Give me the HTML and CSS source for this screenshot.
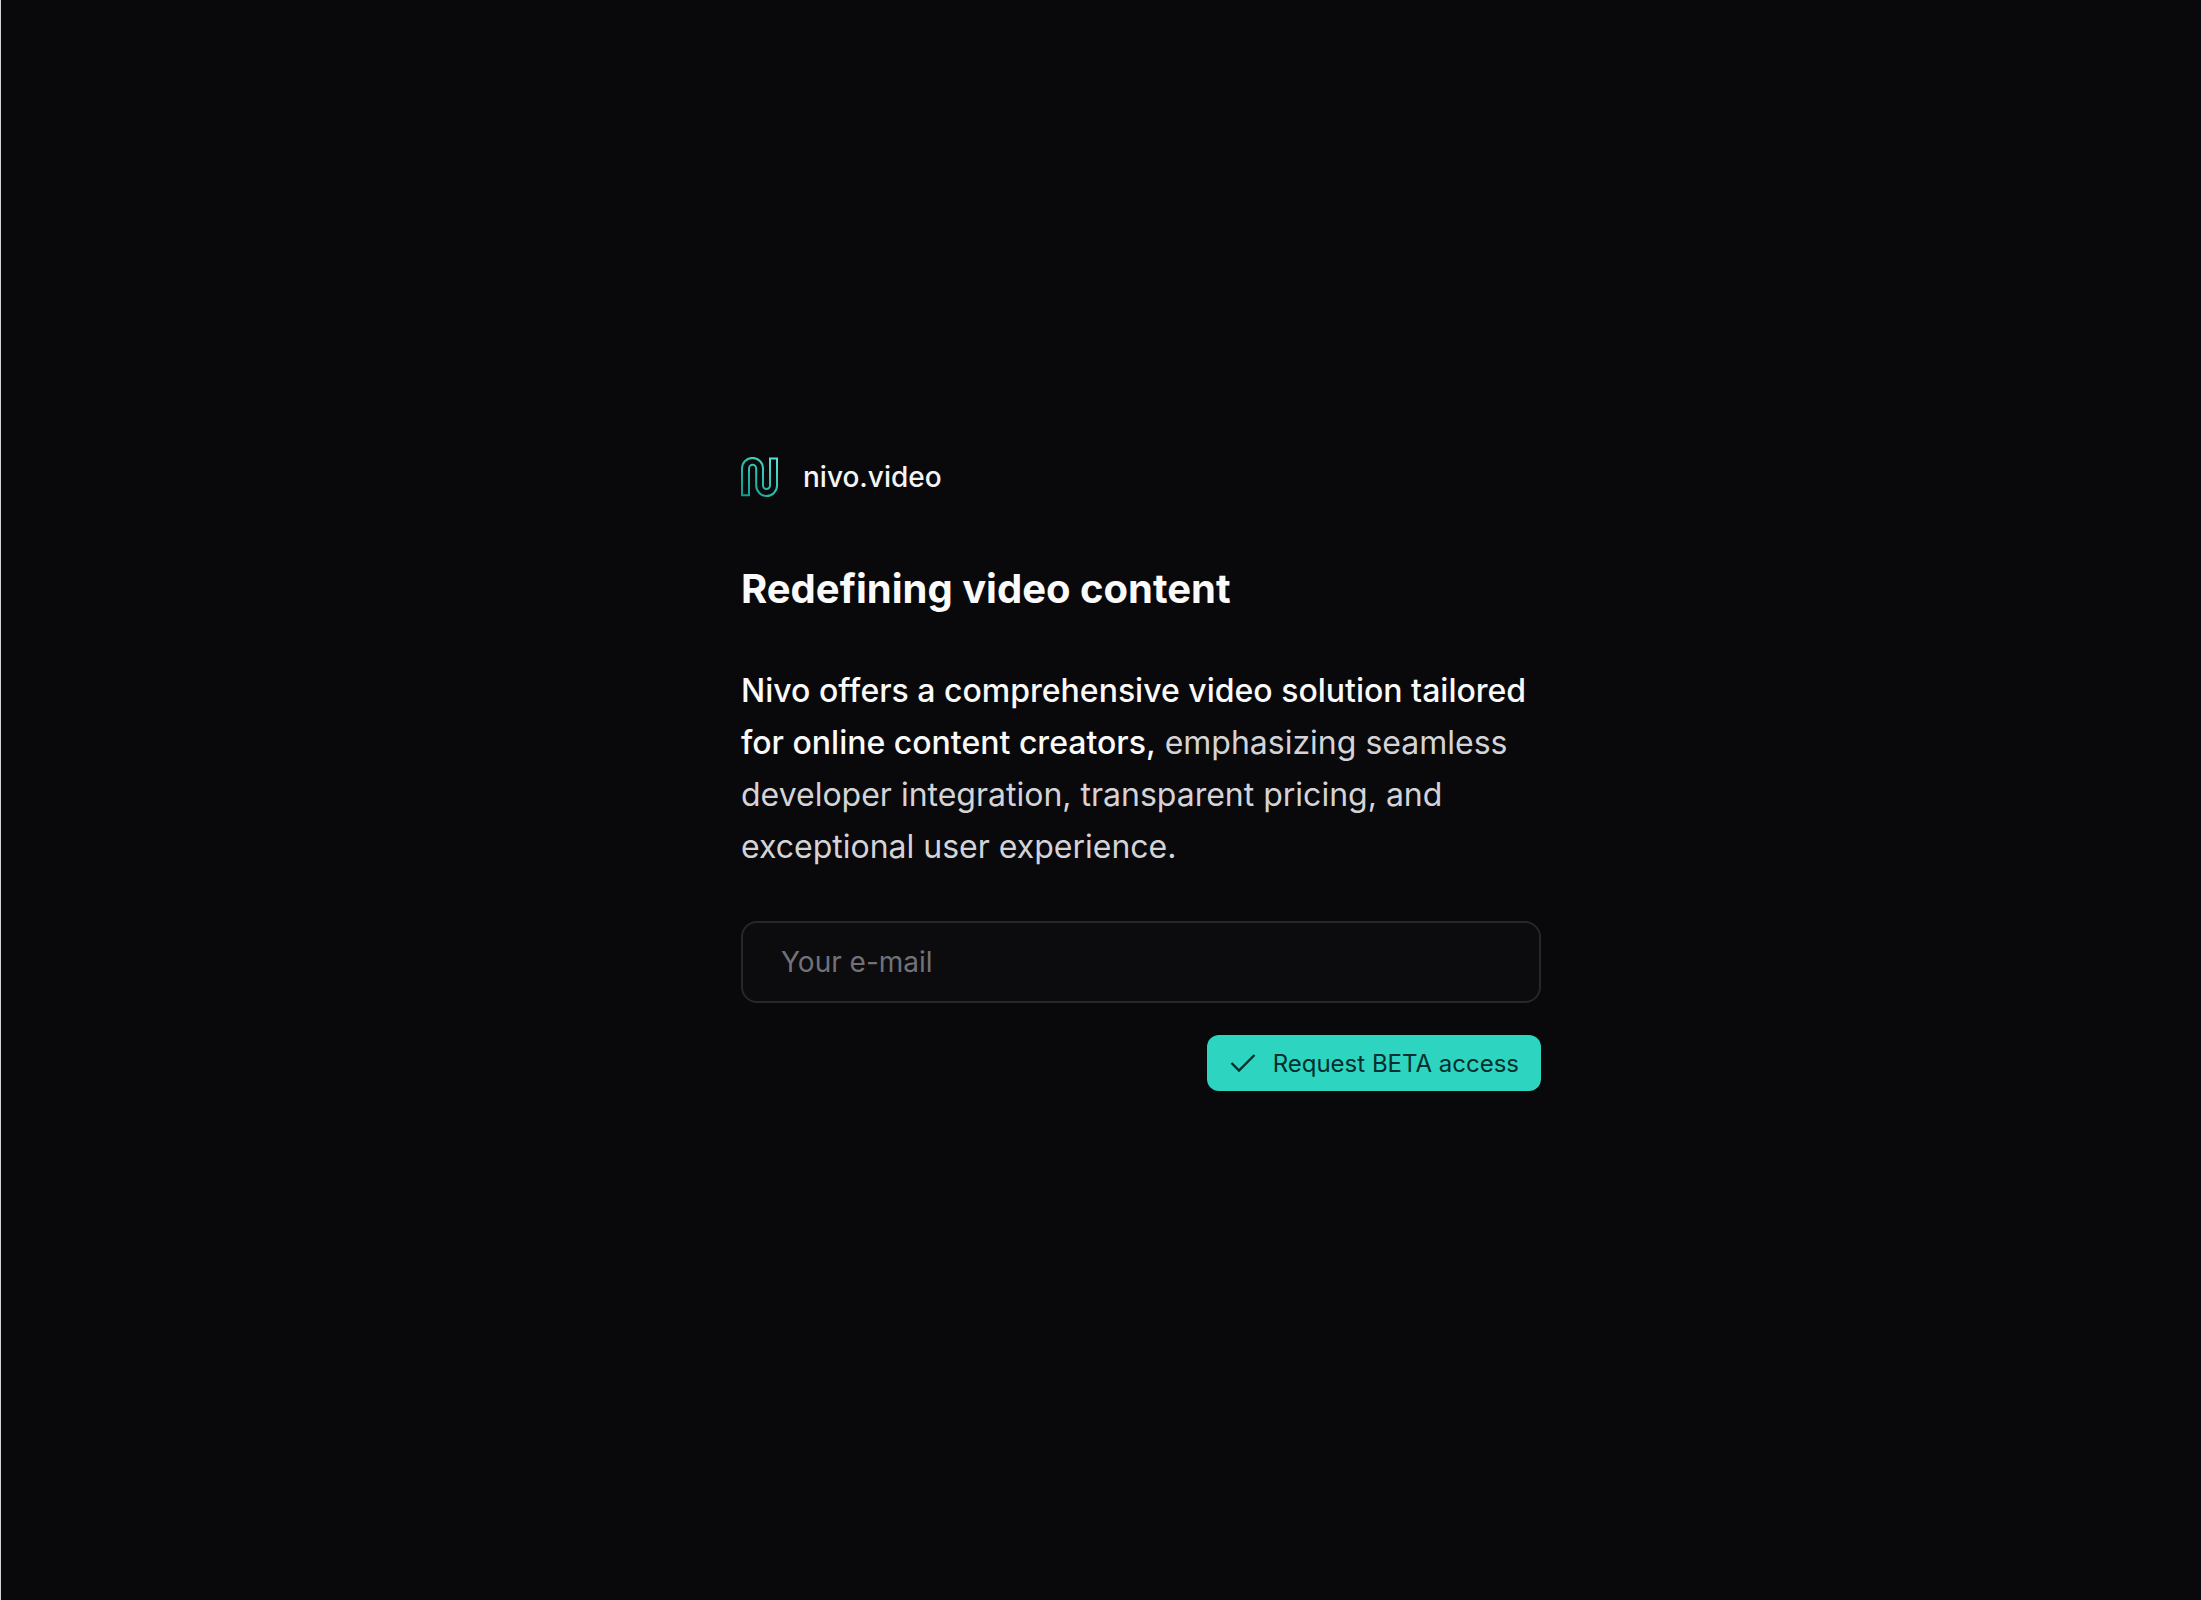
FILE: index.html
```html
<!DOCTYPE html>
<html lang="en">
<head>
  <meta charset="utf-8">
  <meta name="viewport" content="width=device-width, initial-scale=1">
  <title>nivo.video</title>
  <link rel="stylesheet" href="styles.css">
</head>
<body>
  <main class="page">
    <section class="intro">
      <a class="brand" href="#">
        <svg class="brand-mark" viewBox="0 0 38 40" fill="none" aria-hidden="true">
          <defs>
            <linearGradient id="mark" x1="38" y1="0" x2="0" y2="40" gradientUnits="userSpaceOnUse">
              <stop stop-color="#5eead4"/>
              <stop offset=".5" stop-color="#2dbfae"/>
              <stop offset="1" stop-color="#0d9488"/>
            </linearGradient>
          </defs>
          <path d="M1 38.2H8V11.4a3.6 3.6 0 0 1 7.2 0V28.6a10.4 10.4 0 0 0 20.8 0V1.6H29V28.6a3.5 3.5 0 0 1-7 0V11.4a10.5 10.5 0 0 0-21 0Z" stroke="url(#mark)" stroke-width="2"/>
        </svg>
        <span>nivo.video</span>
      </a>
      <h1 class="title">Redefining video content</h1>
      <p class="lead"><strong class="lead-strong">Nivo offers a comprehensive video solution tailored for online content creators,</strong> emphasizing seamless developer integration, transparent pricing, and exceptional user experience.</p>
      <form class="signup">
        <input class="email" type="email" placeholder="Your e-mail" aria-label="Your e-mail">
        <button class="submit" type="submit">
          <svg class="check" viewBox="0 0 28 28" fill="none" aria-hidden="true">
            <path d="M2.5 14L10 21.5L25.5 6" stroke="currentColor" stroke-width="2.4"/>
          </svg>
          Request BETA access
        </button>
      </form>
    </section>
  </main>
</body>
</html>
```
FILE: styles.css
```css
* {
  box-sizing: border-box;
}

body {
  margin: 0;
  background: #09090b;
  color: #fafafa;
  font-family: Inter, "Liberation Sans", sans-serif;
}

.page {
  display: flex;
  align-items: center;
  justify-content: center;
  min-height: 100vh;
  padding: 0 0 52px 80px;
  border-left: 1px solid #d4d4d8;
}

.intro {
  display: flex;
  flex-direction: column;
  width: 100%;
  max-width: 800px;
}

.brand {
  display: flex;
  align-items: center;
  gap: 24px;
  align-self: flex-start;
  color: #f4f4f5;
  font-size: 28px;
  font-weight: 500;
  line-height: 40px;
  text-decoration: none;
}

.brand-mark {
  width: 38px;
  height: 40px;
}

.title {
  margin: 64px 0 48px;
  font-size: 40px;
  font-weight: 700;
  line-height: 56px;
}

.lead {
  margin: 0 0 48px;
  color: #d4d4d8;
  font-size: 32px;
  line-height: 52px;
}

.lead-strong {
  color: #fafafa;
  font-weight: 500;
}

.signup {
  display: flex;
  flex-direction: column;
  gap: 32px;
}

.email {
  width: 100%;
  height: 82px;
  padding: 0 38px;
  border: 2px solid #27272a;
  border-radius: 16px;
  background: #0c0c0e;
  color: #fafafa;
  font: inherit;
  font-size: 28px;
}

.email::placeholder {
  color: #71717a;
  opacity: 1;
}

.submit {
  display: flex;
  align-items: center;
  align-self: flex-end;
  gap: 16px;
  height: 56px;
  padding: 0 22px;
  border: 0;
  border-radius: 12px;
  background: #2dd4bf;
  color: #042f2e;
  font: inherit;
  font-size: 24px;
}

.check {
  width: 28px;
  height: 28px;
}
```
